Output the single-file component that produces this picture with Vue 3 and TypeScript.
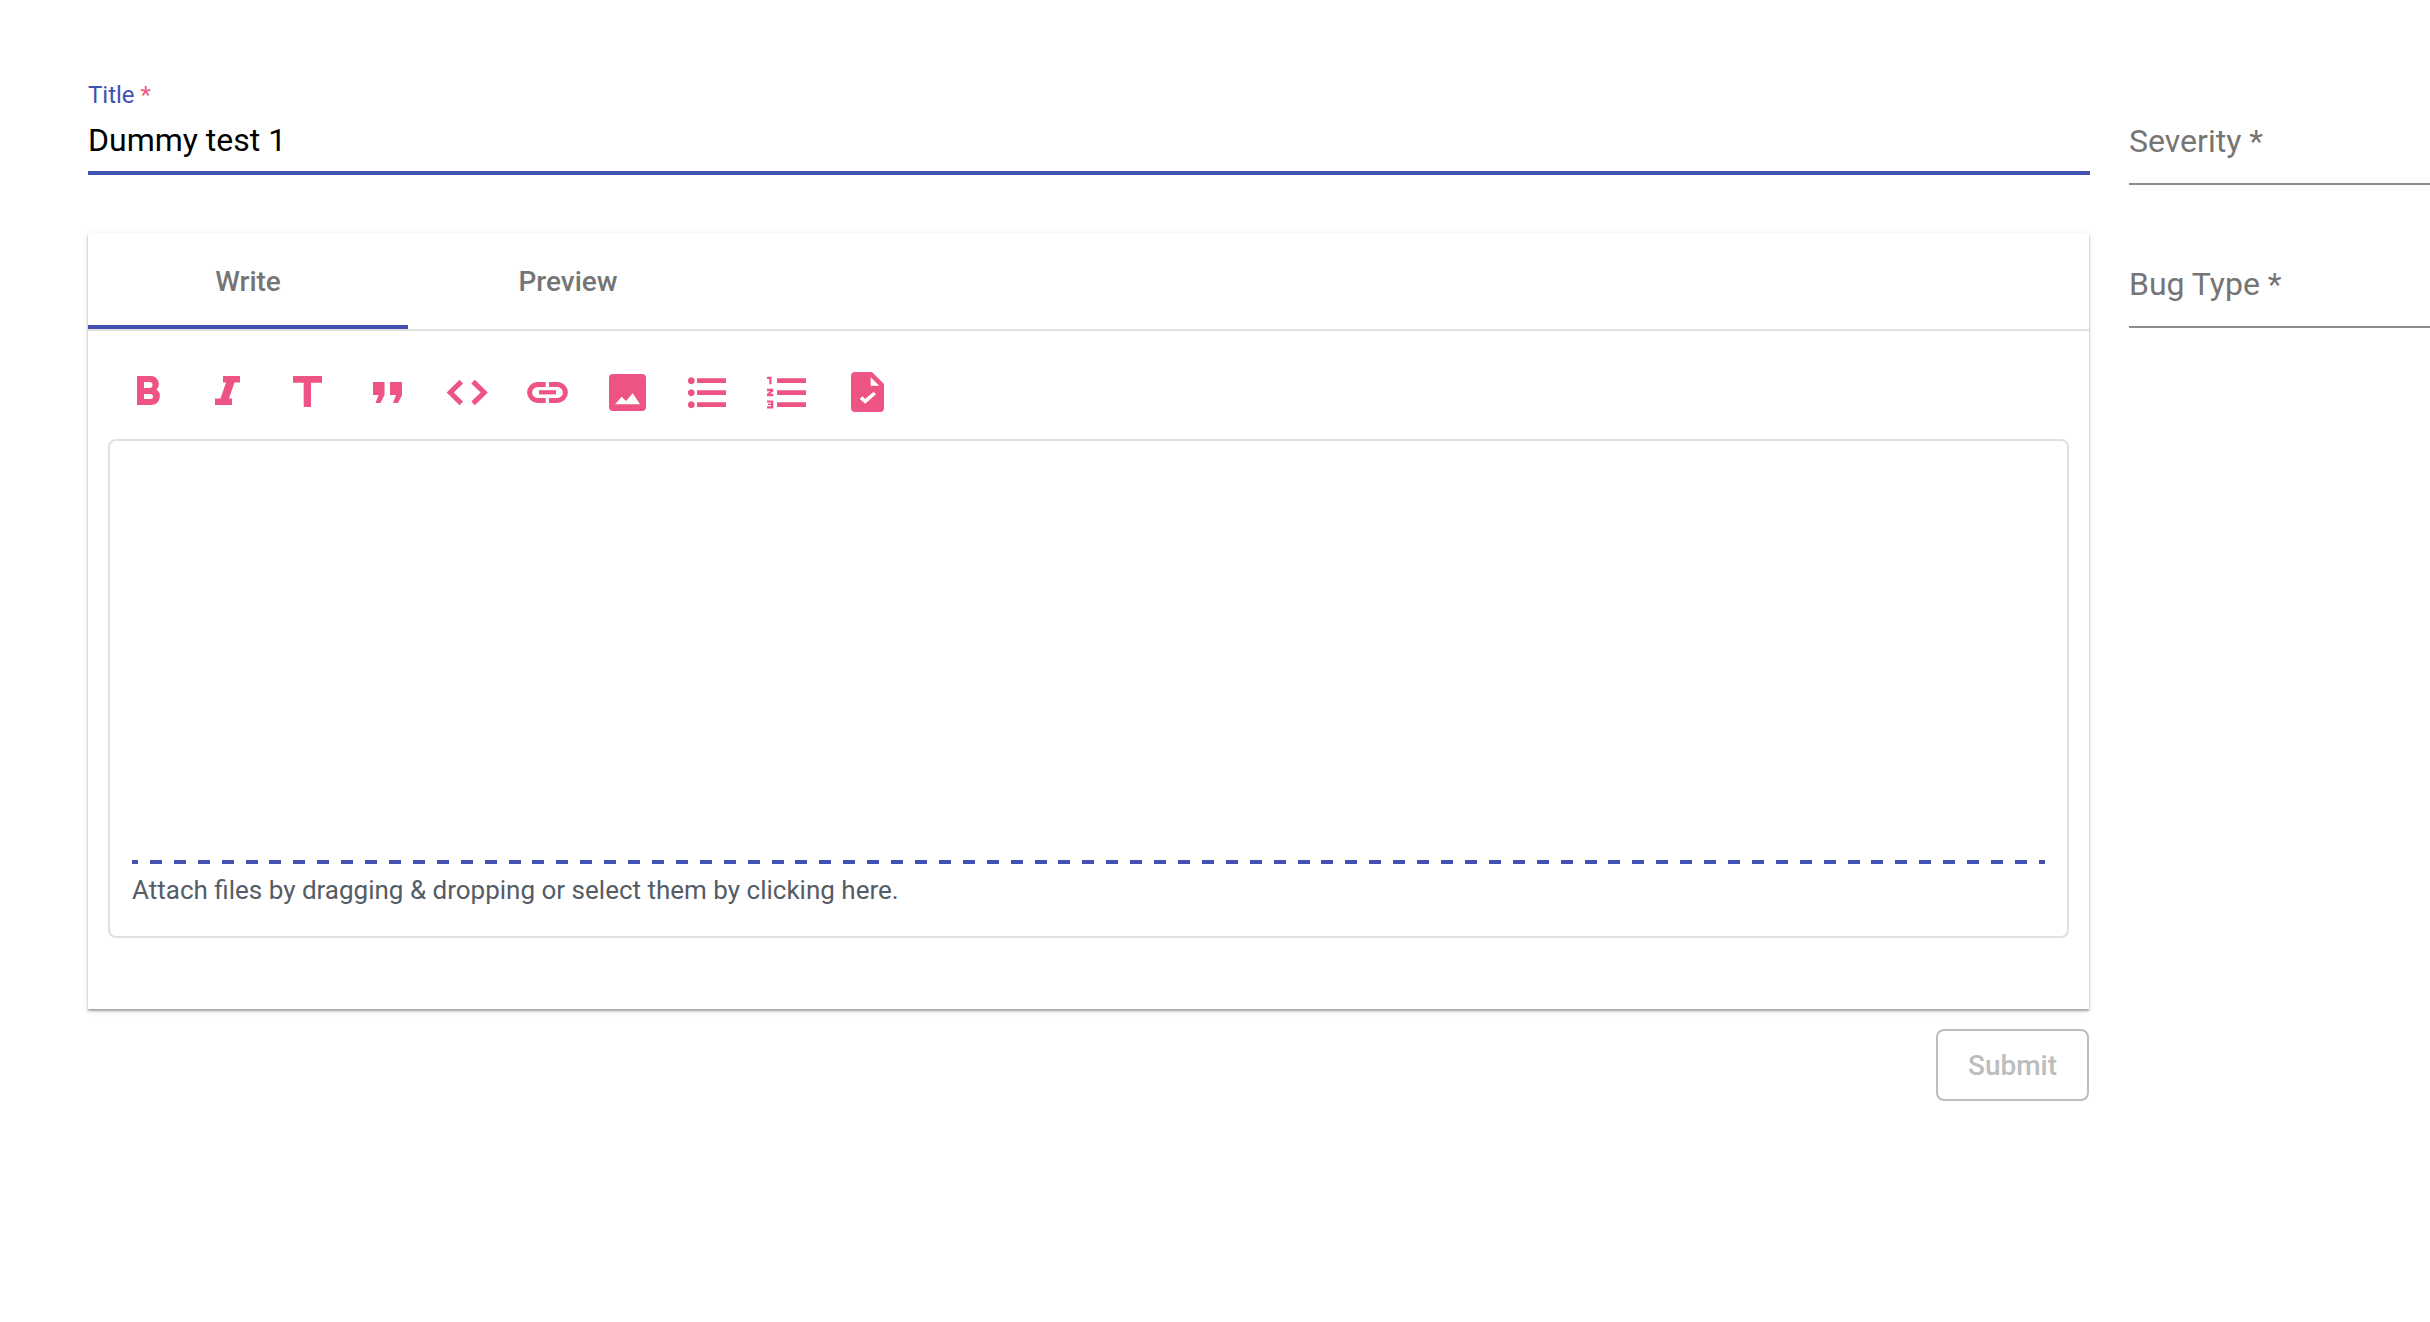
<script setup lang="ts">
interface IconPart { d: string; kind: 'fill' | 'line' | 'white' | 'whiteline' }
interface Icon { name: string; parts: IconPart[] }

const icons: Icon[] = [
  { name: 'bold', parts: [{ kind: 'fill', d: 'M20 14H33.5A8 8 0 0 1 39.5 27.6A8.6 8.6 0 0 1 34 43H20ZM27 20V26H32.5A3 3 0 0 0 32.5 20ZM27 32V37H33.5A2.5 2.5 0 0 0 33.5 32Z' }] },
  { name: 'italic', parts: [{ kind: 'fill', d: 'M26 14H43V20.5H37.5L32 36.5H35V43H18V36.5H23.5L29 20.5H26Z' }] },
  { name: 'title', parts: [{ kind: 'fill', d: 'M16 14H45V20.7H34V45H26.7V20.7H16Z' }] },
  { name: 'quote', parts: [{ kind: 'fill', d: 'M16 20H27.5V33L23.5 41H18.5L21.5 33H16ZM33 20H45V33L41 41H36L39 33H33Z' }] },
  { name: 'code', parts: [{ kind: 'line', d: 'M24.3 19.6L13.2 30.5L24.3 41.4M36.1 19.6L47.2 30.5L36.1 41.4' }] },
  { name: 'link', parts: [
    { kind: 'line', d: 'M28.7 22.6H20.5A7.9 7.9 0 0 0 20.5 38.4H28.7M32 22.6H40.5A7.9 7.9 0 0 1 40.5 38.4H32' },
    { kind: 'fill', d: 'M22 28.2H39V32.4H22Z' },
  ] },
  { name: 'image', parts: [{ kind: 'fill', d: 'M16 12H45A4 4 0 0 1 49 16V45A4 4 0 0 1 45 49H16A4 4 0 0 1 12 45V16A4 4 0 0 1 16 12ZM18 42.3H43L35.7 31.3L29 39L24.7 34.7Z' }] },
  { name: 'list', parts: [{ kind: 'fill', d: 'M20 16.3H49V21H20ZM20 28.3H49V33H20ZM20 40.3H49V45H20ZM14.3 15.2A3.5 3.5 0 1 1 14.29 15.2ZM14.3 27.2A3.5 3.5 0 1 1 14.29 27.2ZM14.3 39.2A3.5 3.5 0 1 1 14.29 39.2Z' }] },
  { name: 'ordered', parts: [{ kind: 'fill', d: 'M20 16.3H49V21H20ZM20 28.3H49V33H20ZM20 40.3H49V45H20ZM10 14.7H14.5V22.3H12.3V16.9H10ZM10 26.7H16.3V29.2L13 31.8H16.3V34.3H10V31.8L13.3 29.2H10ZM10 38.5H16.3V46.5H10V44.2H14V43H11V41.4H14V40.4H10Z' }] },
  { name: 'task', parts: [
    { kind: 'fill', d: 'M18 10H35L47 22V46A4 4 0 0 1 43 50H18A4 4 0 0 1 14 46V14A4 4 0 0 1 18 10Z' },
    { kind: 'white', d: 'M33.7 15.3L42.3 23.7H33.7Z' },
    { kind: 'whiteline', d: 'M24 35.6L28.2 39.4L37.8 31' },
  ] },
]
</script>

<template>
  <div class="page">
    <main class="main">
      <div class="title-field">
        <label class="title-label">Title <span class="req">*</span></label>
        <div class="title-value">Dummy test 1</div>
      </div>

      <section class="card">
        <div class="tabs">
          <div class="tab active">Write</div>
          <div class="tab">Preview</div>
        </div>
        <div class="toolbar">
          <svg v-for="icon in icons" :key="icon.name" class="icon" viewBox="0 0 60 60" width="60" height="60">
            <path
              v-for="(part, i) in icon.parts"
              :key="i"
              :d="part.d"
              :class="part.kind"
              fill-rule="evenodd"
            />
          </svg>
        </div>
        <div class="editor">
          <div class="area"></div>
          <div class="dashes"></div>
          <p class="attach">Attach files by dragging &amp; dropping or select them by clicking here.</p>
        </div>
      </section>

      <div class="actions">
        <button class="submit" disabled>Submit</button>
      </div>
    </main>

    <aside class="side">
      <div class="select">Severity *</div>
      <div class="select">Bug Type *</div>
    </aside>
  </div>
</template>

<style>
html, body { margin: 0; background: #fff; overflow: hidden; }
</style>

<style scoped>
.page {
  width: 2430px;
  height: 1322px;
  overflow: hidden;
  box-sizing: border-box;
  padding: 81px 0 0 88px;
  display: flex;
  gap: 39px;
  background: #fff;
  font-family: Roboto, "Liberation Sans", sans-serif;
}
.main { width: 2002px; flex: none; display: flex; flex-direction: column; }
.title-field { display: flex; flex-direction: column; }
.title-label { font-size: 24px; line-height: 28px; color: #3f51b5; }
.req { color: #ee5483; }
.title-value {
  font-size: 32px;
  line-height: 40px;
  padding: 11px 0 11px;
  color: #000;
  border-bottom: 4px solid #4352b0;
}
.card {
  margin-top: 58px;
  margin-right: 1px;
  height: 776px;
  box-sizing: border-box;
  padding: 0 20px 71px 20px;
  display: flex;
  flex-direction: column;
  background: #fff;
  box-shadow: 0 2px 6px rgba(0, 0, 0, 0.12), 0 2px 2px rgba(0, 0, 0, 0.3);
}
.tabs {
  display: flex;
  height: 96px;
  margin: 0 -20px;
  border-bottom: 2px solid #e0e0e0;
  flex: none;
}
.tab {
  width: 320px;
  box-sizing: border-box;
  text-align: center;
  font-size: 28px;
  font-weight: 500;
  line-height: 98px;
  color: #757575;
}
.tab.active { border-bottom: 4px solid #4352b0; }
.toolbar {
  display: flex;
  gap: 20px;
  padding: 31px 0 17px 9px;
  flex: none;
}
.icon { display: block; flex: none; }
.fill { fill: #ee5483; }
.line { fill: none; stroke: #ee5483; stroke-width: 5; }
.white { fill: #fff; }
.whiteline { fill: none; stroke: #fff; stroke-width: 3.6; }
.editor {
  flex: 1;
  border: 2px solid #e0e0e0;
  border-radius: 8px;
  display: flex;
  flex-direction: column;
  padding: 0 22px;
}
.area { flex: 1; }
.dashes {
  height: 4px;
  background: repeating-linear-gradient(to right, #4352b0 0 6px, transparent 6px 17.91px, #4352b0 17.91px 23.91px);
}
.attach {
  margin: 8px 0 0;
  height: 64px;
  font-size: 26px;
  line-height: 36px;
  color: #555c66;
}
.actions { display: flex; justify-content: flex-end; margin-top: 20px; margin-right: 1px; }
.submit {
  width: 153px;
  height: 72px;
  box-sizing: border-box;
  border: 2px solid #bdbdbd;
  border-radius: 8px;
  background: #fff;
  color: #bdbdbd;
  font-family: inherit;
  font-size: 28px;
  font-weight: 500;
  padding: 0;
}
.side { width: 400px; flex: none; }
.select {
  box-sizing: border-box;
  height: 104px;
  padding-top: 40px;
  margin-bottom: 39px;
  font-size: 32px;
  line-height: 40px;
  color: #757575;
  border-bottom: 2px solid #8c8c8c;
}
</style>
